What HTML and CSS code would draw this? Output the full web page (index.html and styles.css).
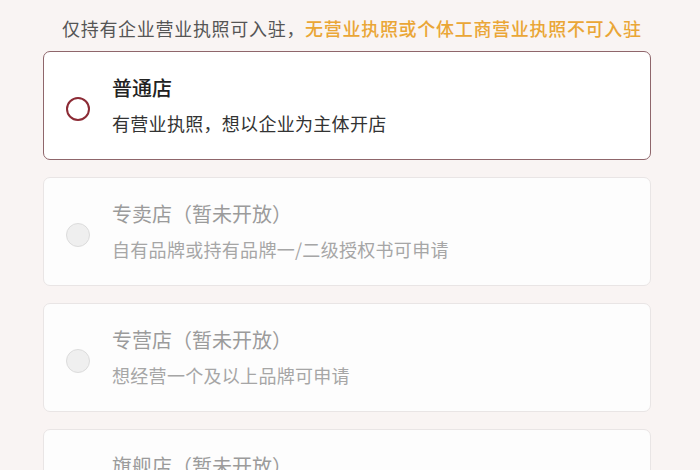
FILE: index.html
```html
<!DOCTYPE html>
<html lang="zh-CN">
<head>
    <meta charset="utf-8">
    <title>选择店铺类型</title>
    <link rel="stylesheet" href="styles.css">
</head>
<body>

    <div class="shop-type">
        <p class="shop-type-tip">仅持有企业营业执照可入驻，<span class="shop-type-warn">无营业执照或个体工商营业执照不可入驻</span></p>

        <ul class="shop-type-list">
            <li class="shop-type-item shop-type-item-active">
                <span class="shop-type-radio"></span>
                <div class="shop-type-text">
                    <div class="shop-type-name">普通店</div>
                    <div class="shop-type-desc">有营业执照，想以企业为主体开店</div>
                </div>
            </li>
            <li class="shop-type-item shop-type-item-disabled">
                <span class="shop-type-radio"></span>
                <div class="shop-type-text">
                    <div class="shop-type-name">专卖店（暂未开放）</div>
                    <div class="shop-type-desc">自有品牌或持有品牌一/二级授权书可申请</div>
                </div>
            </li>
            <li class="shop-type-item shop-type-item-disabled">
                <span class="shop-type-radio"></span>
                <div class="shop-type-text">
                    <div class="shop-type-name">专营店（暂未开放）</div>
                    <div class="shop-type-desc">想经营一个及以上品牌可申请</div>
                </div>
            </li>
            <li class="shop-type-item shop-type-item-disabled">
                <span class="shop-type-radio"></span>
                <div class="shop-type-text">
                    <div class="shop-type-name">旗舰店（暂未开放）</div>
                    <div class="shop-type-desc">自有品牌或持有独占授权书可申请</div>
                </div>
            </li>
        </ul>
    </div>

</body>
</html>
```

FILE: styles.css
```css
html, body {
    margin:0;
    padding:0;
    background:#f9f4f3;
}

body {
    font-family:"Noto Sans CJK SC","Noto Sans",sans-serif;
    color:#333;
}

/* shop type picker */
.shop-type {
    width:608px;
    padding:15px 0 0 43px;
}

.shop-type-tip {
    margin:0 0 10px 19px;
    font-size:18px;
    line-height:26px;
    letter-spacing:0.7px;
    color:#555;
    white-space:nowrap;
}

.shop-type-warn {
    color:#eaa636;
    font-weight:500;
}

.shop-type-list {
    list-style:none;
    margin:0;
    padding:0;
    display:flex;
    flex-direction:column;
    gap:17px;
}

.shop-type-item {
    display:flex;
    align-items:center;
    gap:22px;
    height:109px;
    box-sizing:border-box;
    padding:0 0 0 22px;
    background:#fdfdfd;
    border:1.5px solid #e9e5e5;
    border-radius:7px;
}

.shop-type-item-active {
    background:#fff;
    border-color:#8f666b;
}

.shop-type-radio {
    flex:none;
    width:24px;
    height:24px;
    margin-top:7px;
    box-sizing:border-box;
    border-radius:50%;
    border:1.5px solid #dcdcdc;
    background:#efefef;
}

.shop-type-item-active .shop-type-radio {
    border:2px solid #8c2b35;
    background:#fff;
}

.shop-type-name {
    font-size:20px;
    line-height:26px;
    margin-bottom:9px;
    color:#9b9b9b;
}

.shop-type-desc {
    font-size:18px;
    line-height:26px;
    letter-spacing:0.3px;
    color:#a6a6a6;
}

.shop-type-item-active .shop-type-name {
    color:#222;
    font-weight:500;
}

.shop-type-item-active .shop-type-desc {
    color:#333;
}
```
